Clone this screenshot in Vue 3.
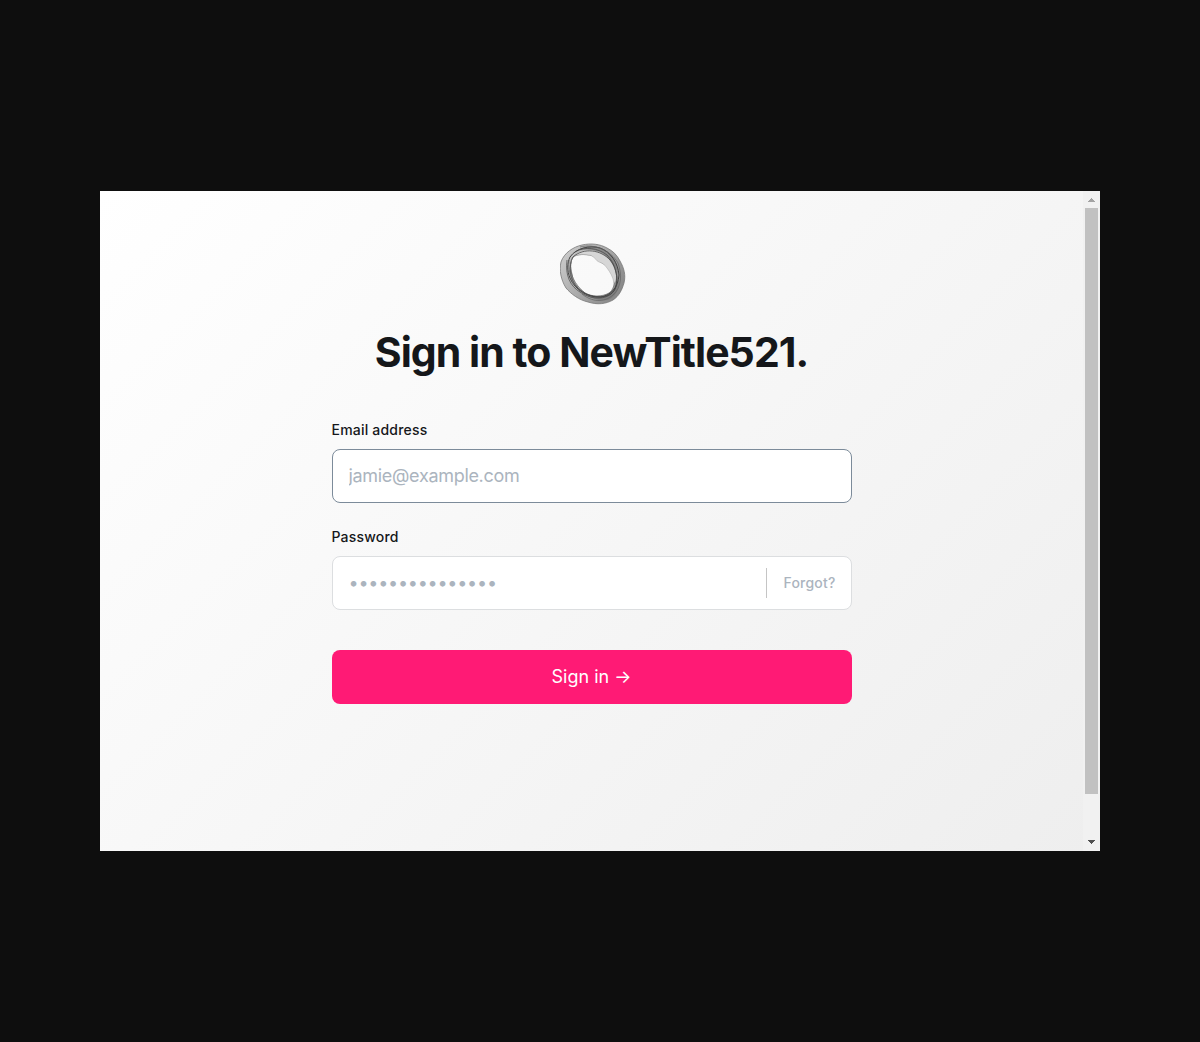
<script setup>
import { ref } from 'vue'
const email = ref('')
const password = ref('')
</script>

<template>
  <div class="stage">
    <div class="window">
      <main class="page">
        <form class="signin" @submit.prevent>
          <svg class="logo" viewBox="0 0 66 62" aria-hidden="true">
            <defs>
              <linearGradient id="ring" x1="0" y1="0.2" x2="1" y2="0.8">
                <stop offset="0" stop-color="#cbcbcb" />
                <stop offset="0.5" stop-color="#a8a8a8" />
                <stop offset="1" stop-color="#858585" />
              </linearGradient>
            </defs>
            <path fill="url(#ring)" stroke="#777" stroke-width=".8" fill-rule="evenodd" d="M22 2C31 0 40 1 47 5C53 8 57 12 60 18C64 25 66 32 64 40C62 47 59 53 53 57C46 61 37 62 28 59C19 57 11 51 6 45C1 37 -1 27 1 19C4 10 13 4 22 2ZM13 14C17 11 25 11 32 12.500C37 14 38 18 42 20C47 22 51 29 54 35C55 42 53 47 49 50C42 54 32 54 25 50C18 46 13 39 12 31C10 24 10 18 13 14Z" />
            <path fill="#d6d6d6" stroke="#aaa" stroke-width=".5" d="M14 13C19 6 31 5 39 9C49 13 55 22 56 30C57 34 56 38 54 40C53 34 50 29 47 25C44 21 42 20 39 19C36 18 35 14 31 12.500C25 11 18 11 14 13Z" />
            <path fill="#777" fill-opacity=".65" d="M18 7C28 0 40 3 48 9C55 15 58 22 58 30C53 20 48 13 40 9C32 6 25 6 18 7ZM26 52C36 56 47 54 54 46C56 44 57 40 59 37C60 45 56 54 48 57C39 58 32 56 26 52Z" />
            <g fill="none" stroke="#444">
              <path stroke-width="1" d="M10 14C16 5 30 2 40 5C51 9 58 20 59 32C58 45 51 52 41 54C28 55 15 47 10 35C7 28 7 20 10 14Z" />
              <path stroke-width=".8" d="M13 14C8 23 10 37 17 44C25 53 41 57 51 51C60 44 58 27 50 17C41 7 24 4 13 14Z" />
              <path stroke-width=".7" d="M7 17C5 32 10 43 20 49C33 58 49 57 55 46C59 35 56 21 47 12C38 5 25 3 15 9" />
              <path stroke="#626262" stroke-width=".7" d="M11 19C9 30 14 41 25 50M20 4C35 0 51 8 58 20C62 31 62 44 53 52C44 60 32 59 22 51M9 17C8 30 12 41 20 47" />
            </g>
          </svg>
          <h1>Sign in to NewTitle521.</h1>

          <label for="email">Email address</label>
          <div class="field active">
            <input id="email" v-model="email" type="email" placeholder="jamie@example.com" />
          </div>

          <label class="second" for="password">Password</label>
          <div class="field">
            <input id="password" v-model="password" type="password" placeholder="•••••••••••••••" />
            <button type="button" class="forgot">Forgot?</button>
          </div>

          <button type="submit" class="submit">Sign in →</button>
        </form>
      </main>
      <div class="scrollbar" aria-hidden="true">
        <svg class="arrow" viewBox="0 0 17 17"><path fill="#a3a3a3" d="M8 7h1v1h1v1h1v1h1v1H5v-1h1V9h1V8h1z" /></svg>
        <div class="thumb"></div>
        <svg class="arrow" viewBox="0 0 17 17"><path fill="#505050" d="M5 6h7v1h-1v1h-1v1H9v1H8V9H7V8H6V7H5z" /></svg>
      </div>
    </div>
  </div>
</template>

<style>
body {
  background: #0e0e0e;
}
</style>

<style scoped>
.stage {
  box-sizing: border-box;
  height: 1042px;
  padding: 191px 100px;
  background: #0e0e0e;
  font-family: Inter, sans-serif;
}
.window {
  display: flex;
  height: 660px;
  background: linear-gradient(135deg, #fff 0%, #eee 100%);
}
.page {
  flex: 1;
  display: flex;
  justify-content: center;
}
.signin {
  display: flex;
  flex-direction: column;
  width: 520px;
  padding-top: 52px;
}
.logo {
  align-self: center;
  width: 66px;
  height: 62px;
  margin-left: 2px;
}
h1 {
  margin: 21px 0 0;
  color: #15171a;
  font-size: 41px;
  font-weight: 700;
  line-height: 52px;
  letter-spacing: -0.95px;
  text-align: center;
  white-space: nowrap;
}
label {
  margin-top: 41px;
  color: #15171a;
  font-size: 14px;
  font-weight: 500;
  line-height: 22px;
  letter-spacing: 0.2px;
}
label.second {
  margin-top: 23px;
}
.field {
  box-sizing: border-box;
  display: flex;
  align-items: center;
  height: 54px;
  margin-top: 8px;
  padding: 0 15px 0 16px;
  border: 1px solid #dcdee0;
  border-radius: 8px;
  background: #fff;
}
.field.active {
  border-color: #7c8b9a;
}
input {
  flex: 1;
  min-width: 0;
  padding: 0;
  border: 0;
  outline: 0;
  background: none;
  font: 400 18px/24px Inter, sans-serif;
  letter-spacing: -0.24px;
}
input[type='email'] {
  letter-spacing: -0.31px;
}
input::placeholder {
  color: #abb4be;
  opacity: 1;
}
.forgot {
  height: 30px;
  padding: 0 0 0 16px;
  border: 0;
  border-left: 1px solid #c5c5c5;
  background: none;
  color: #abb4be;
  font: 500 14px/30px Inter, sans-serif;
  letter-spacing: 0.2px;
}
.submit {
  height: 54px;
  margin-top: 40px;
  padding: 0;
  border: 0;
  border-radius: 8px;
  background: #ff1a75;
  color: #fff;
  font: 400 18px/54px Inter, sans-serif;
}
.scrollbar {
  display: flex;
  flex-direction: column;
  width: 17px;
  background: #f1f1f1;
}
.arrow {
  width: 17px;
  height: 17px;
}
.thumb {
  width: 13px;
  height: 586px;
  margin: 0 2px 40px;
  background: #c1c1c1;
}
</style>
